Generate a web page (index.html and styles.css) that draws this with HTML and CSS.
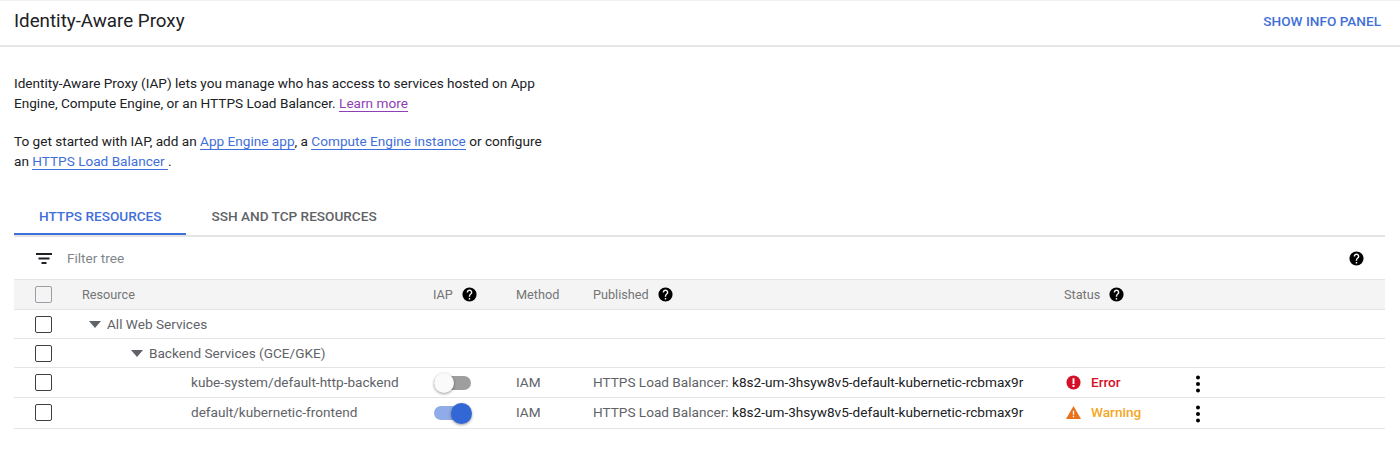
FILE: index.html
```html
<!DOCTYPE html>
<html lang="en">
<head>
<meta charset="utf-8">
<title>Identity-Aware Proxy</title>
<link rel="stylesheet" href="styles.css">
</head>
<body>
<svg class="sprites" width="0" height="0" aria-hidden="true">
  <symbol id="help" viewBox="0 0 24 24"><path fill="#000" d="M12 2a10 10 0 1 0 0 20 10 10 0 0 0 0-20zm1 17h-2v-2h2v2zm2.07-7.75-.9.92C13.45 12.9 13 13.5 13 15h-2v-.5c0-1.1.45-2.1 1.17-2.83l1.24-1.26c.37-.36.59-.86.59-1.41 0-1.1-.9-2-2-2s-2 .9-2 2H8c0-2.21 1.79-4 4-4s4 1.79 4 4c0 .88-.36 1.68-.93 2.25z"/></symbol>
  <symbol id="more" viewBox="0 0 6 18"><circle cx="3" cy="2.500" r="2"/><circle cx="3" cy="9" r="2"/><circle cx="3" cy="15.500" r="2"/></symbol>
</svg>
<header class="topbar">
  <h1 class="title">Identity-Aware Proxy</h1>
  <a class="info-link">SHOW INFO PANEL</a>
</header>
<main class="content">
  <section class="intro">
    <p>Identity-Aware Proxy (IAP) lets you manage who has access to services hosted on App Engine, Compute Engine, or an HTTPS Load Balancer. <a class="link visited">Learn more</a></p>
    <p>To get started with IAP, add an <a class="link">App Engine app</a>, a <a class="link">Compute Engine instance</a> or configure an <a class="link">HTTPS Load Balancer </a> .</p>
  </section>
  <nav class="tabs">
    <a class="tab active">HTTPS RESOURCES</a>
    <a class="tab">SSH AND TCP RESOURCES</a>
  </nav>
  <div class="filter">
    <svg class="filter-icon" viewBox="0 0 16 11"><path d="M0 0h16v2H0zM2.500 4.500h11v2h-11zM5.500 9h5v2h-5z"/></svg>
    <span class="filter-text">Filter tree</span>
    <svg class="help filter-help"><use href="#help"/></svg>
  </div>
  <div class="table">
    <div class="row head">
      <span class="check muted"></span>
      <span>Resource</span>
      <span class="with-help">IAP <svg class="help"><use href="#help"/></svg></span>
      <span>Method</span>
      <span class="with-help">Published <svg class="help"><use href="#help"/></svg></span>
      <span class="with-help">Status <svg class="help"><use href="#help"/></svg></span>
    </div>
    <div class="row h29">
      <span class="check"></span>
      <span class="tree level1"><i class="caret"></i>All Web Services</span>
    </div>
    <div class="row h29">
      <span class="check"></span>
      <span class="tree level2"><i class="caret"></i>Backend Services (GCE/GKE)</span>
    </div>
    <div class="row h30">
      <span class="check"></span>
      <span class="tree leaf">kube-system/default-http-backend</span>
      <span class="toggle"><i class="knob"></i></span>
      <span>IAM</span>
      <span>HTTPS Load Balancer: <b class="lb">k8s2-um-3hsyw8v5-default-kubernetic-rcbmax9r</b></span>
      <span class="status error">
        <svg class="status-icon" viewBox="0 0 16 16"><circle cx="8" cy="8" r="7.500" fill="#d50f25"/><path fill="#fff" d="M7 3.500h2v6H7zM7 10.700h2v2H7z"/></svg>
        <span class="status-text">Error</span>
        <svg class="more"><use href="#more"/></svg>
      </span>
    </div>
    <div class="row h31">
      <span class="check"></span>
      <span class="tree leaf">default/kubernetic-frontend</span>
      <span class="toggle on"><i class="knob"></i></span>
      <span>IAM</span>
      <span>HTTPS Load Balancer: <b class="lb">k8s2-um-3hsyw8v5-default-kubernetic-rcbmax9r</b></span>
      <span class="status warning">
        <svg class="status-icon" viewBox="0 0 16 14"><path fill="#e8711a" d="M8 0l8 14H0z"/><path fill="#fff" d="M7.300 5h1.400v4.500H7.300zM7.300 10.500h1.400V12H7.300z"/></svg>
        <span class="status-text">Warning</span>
        <svg class="more"><use href="#more"/></svg>
      </span>
    </div>
  </div>
</main>
</body>
</html>
```

FILE: styles.css
```css
* { box-sizing: border-box; }

html, body {
  margin: 0;
  height: 100%;
  background: #fff;
  overflow: hidden;
}

body {
  font-family: Roboto, "Liberation Sans", sans-serif;
  font-size: 13.6px;
  color: #5f6368;
}

.sprites { position: absolute; }

.topbar {
  height: 47px;
  padding: 0 19px 4px 14px;
  display: flex;
  align-items: center;
  justify-content: space-between;
  border-top: 1px solid #f1f1f1;
  border-bottom: 2px solid #e6e6e6;
}

.title {
  margin: 0;
  font-size: 18.750px;
  font-weight: 400;
  color: #202124;
}

.info-link {
  font-size: 13.600px;
  font-weight: 500;
  color: #3f6fd8;
}

.content { padding: 0 15px 0 14px; }

.intro {
  width: 530px;
  padding-top: 26px;
  font-size: 13.6px;
  line-height: 20px;
  color: #202124;
}

.intro p { margin: 0 0 18px; }

.link {
  color: #3f6fd8;
  border-bottom: 1px solid #3f6fd8;
}

.link.visited {
  color: #8e3fb5;
  border-color: #8e3fb5;
}

.tabs {
  margin-top: 27px;
  height: 39px;
  display: flex;
  border-bottom: 2px solid #e4e4e4;
}

.tab {
  height: 37px;
  padding: 0 25px;
  display: flex;
  align-items: center;
  font-size: 13.6px;
  font-weight: 500;
  color: #5f6368;
  border-bottom: 2px solid transparent;
}

.tab.active {
  color: #3f6fd8;
  border-bottom-color: #3f6fd8;
}

.filter {
  height: 42px;
  padding: 0 20px 0 22px;
  display: flex;
  align-items: center;
}

.filter-icon {
  width: 16px;
  height: 11px;
  fill: #202124;
}

.filter-text {
  margin-left: 15px;
  color: #80868b;
}

.help {
  width: 17px;
  height: 17px;
  flex: none;
}

.filter-help { margin-left: auto; }

.table { border-top: 1px solid #e4e4e4; }

.row {
  display: grid;
  grid-template-columns: 68px 351px 83px 77px 471px 1fr;
  align-items: center;
  border-bottom: 1px solid #e4e4e4;
}

.head {
  height: 30px;
  background: #f4f4f4;
  color: #757575;
  font-size: 12.700px;
}

.h29 { height: 29px; }
.h30 { height: 30px; padding-bottom: 1px; }
.h31 { height: 31px; padding-bottom: 2px; }

.with-help {
  display: flex;
  align-items: center;
  gap: 8px;
}

.check {
  display: block;
  width: 17px;
  height: 17px;
  margin-left: 21px;
  border: 1.500px solid #3c4043;
  border-radius: 2px;
}

.check.muted { border-color: #9aa0a6; }

.tree { display: flex; align-items: center; }
.level1 { padding-left: 7px; }
.level2 { padding-left: 49px; }
.leaf { padding-left: 109px; }

.caret {
  width: 0;
  height: 0;
  margin-right: 6px;
  border-left: 6.500px solid transparent;
  border-right: 6.500px solid transparent;
  border-top: 7px solid #5f6368;
}

.toggle {
  position: relative;
  display: block;
  width: 37px;
  height: 14px;
  margin-top: 2px;
  margin-left: 1px;
  border-radius: 7px;
  background: #9e9e9e;
}

.knob {
  position: absolute;
  left: 0;
  top: -3px;
  width: 20px;
  height: 20px;
  border-radius: 50%;
  background: #fafafa;
  box-shadow: 0 1px 3px rgba(0, 0, 0, 0.4);
}

.toggle.on { background: #8fabe8; }

.toggle.on .knob {
  left: auto;
  right: -1px;
  top: -3.500px;
  width: 21px;
  height: 21px;
  background: #3367d6;
}

.lb {
  font-weight: 400;
  color: #202124;
}

.status {
  display: flex;
  align-items: center;
  padding-left: 2px;
}

.status-icon {
  width: 15px;
  height: 15px;
  flex: none;
}

.status-text {
  width: 104px;
  margin-left: 10px;
  font-weight: 500;
}

.error .status-text { color: #d50f25; }
.warning .status-text { color: #f5a623; }

.more {
  width: 6px;
  height: 18px;
  margin-top: 4px;
  flex: none;
}
```
